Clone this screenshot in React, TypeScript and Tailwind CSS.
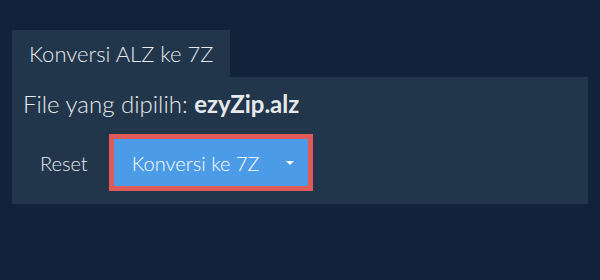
export default function App() {
  return (
    <div className="w-[600px] h-[280px] bg-[#10233a] pt-[30px] px-3 font-['Lato',sans-serif]">
      <div className="flex">
        <div className="h-[47px] px-[17px] flex items-center bg-[#22364b] text-[22px] font-light text-[#e6e9ec]">
          Konversi ALZ ke 7Z
        </div>
      </div>
      <div className="bg-[#22364b] h-[127px] pt-[12px] px-[11px]">
        <p className="text-[24px] font-light text-[#e6e9ec] leading-[30px]">
          File yang dipilih: <span className="font-bold">ezyZip.alz</span>
        </p>
        <div className="flex items-center mt-[15px]">
          <button className="text-[20px] font-light text-[#e6e9ec] px-[17px] h-[57px] mr-[4px]">Reset</button>
          <div className="border-[5px] border-[#e05a5a] flex">
            <button className="bg-[#4b9be6] h-[47px] w-[194px] flex items-center text-[20px] font-light text-white pl-[18px] pr-[14px]">
              <span className="flex-1 text-left">Konversi ke 7Z</span>
              <span className="w-0 h-0 border-l-[4px] border-r-[4px] border-t-[4px] border-l-transparent border-r-transparent border-t-white"></span>
            </button>
          </div>
        </div>
      </div>
    </div>
  );
}
